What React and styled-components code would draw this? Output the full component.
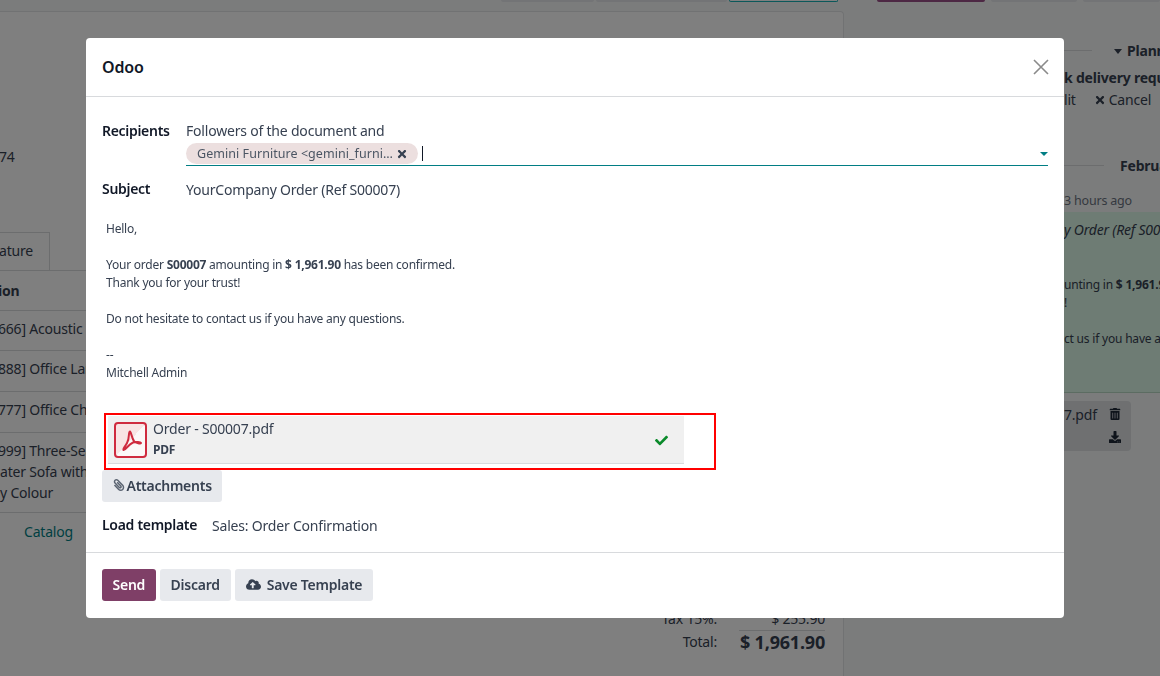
import React from "react";
import styled, { createGlobalStyle } from "styled-components";
import {
  FaCheck,
  FaCloudUploadAlt,
  FaDownload,
  FaPaperclip,
  FaTimes,
  FaTrashAlt,
} from "react-icons/fa";

const GlobalStyle = createGlobalStyle`
  html, body {
    margin: 0;
    padding: 0;
    height: 100%;
    overflow: hidden;
  }
  body {
    font-family: "Noto Sans", "Open Sans", sans-serif;
    font-size: 14px;
    letter-spacing: -0.2px;
    color: #374151;
    background: #f9fafb;
  }
`;

/* page behind the dialog */
const Page = styled.div`
  display: flex;
  width: 1160px;
  height: 676px;
  overflow: hidden;
  background: #f7f9f8;
`;

const Sheet = styled.div`
  width: 844px;
  flex: none;
  display: flex;
  flex-direction: column;
`;

const TopBar = styled.div`
  height: 2px;
  flex: none;
  display: flex;
  justify-content: ${(p) => (p.$start ? "flex-start" : "flex-end")};
  gap: ${(p) => p.$gap || 2}px;
  padding: 0 ${(p) => (p.$start ? 0 : 6)}px 0 ${(p) => (p.$start ? 33 : 0)}px;
`;

const TopButton = styled.div`
  width: ${(p) => p.$w}px;
  box-sizing: border-box;
  background: ${(p) => p.$bg};
  border: ${(p) => (p.$line ? `1px solid ${p.$line}` : "none")};
  border-top: none;
  border-radius: 0 0 3px 3px;
`;

const SheetCard = styled.div`
  margin-top: 9px;
  flex: 1;
  background: #fff;
  border: 1px solid #e2e4e6;
  border-left: none;
  border-bottom: none;
  border-top-right-radius: 4px;
  padding-top: 135px;
  overflow: hidden;
`;

const PartnerCode = styled.div`
  margin-left: -1px;
  height: 85px;
  line-height: 20px;
`;

const Tab = styled.div`
  width: 50px;
  height: 38px;
  box-sizing: border-box;
  border: 1px solid #d8dadd;
  border-left: none;
  border-bottom: none;
  text-align: right;
  padding: 8px 16px 0 0;
  overflow: hidden;
  white-space: nowrap;
  direction: rtl;
`;

const Row = styled.div`
  border-top: 1px solid #d8dadd;
  min-height: ${(p) => p.$h}px;
  box-sizing: border-box;
  padding-top: ${(p) => p.$pad}px;
  line-height: 21px;
  white-space: nowrap;
  text-indent: ${(p) => p.$indent || 0}px;
  font-weight: ${(p) => (p.$bold ? 700 : 400)};
  color: ${(p) => p.$color || "inherit"};
`;

const Totals = styled.div`
  margin: 56px 18px 0 0;
  display: grid;
  grid-template-columns: auto 86px;
  justify-content: end;
  column-gap: 22px;
  align-items: center;
`;

const TotalLabel = styled.div`
  text-align: right;
  line-height: 22px;
`;

const TotalValue = styled.div`
  text-align: right;
  border-top: ${(p) => (p.$big ? "1px solid #d8dadd" : "none")};
  font-size: ${(p) => (p.$big ? "18px" : "14px")};
  font-weight: ${(p) => (p.$big ? 700 : 400)};
  line-height: 22px;
  white-space: nowrap;
`;

const Chatter = styled.div`
  flex: 1;
  display: flex;
  flex-direction: column;
  overflow: hidden;
  white-space: nowrap;
`;

const DateLine = styled.div`
  display: flex;
  align-items: center;
  height: 24px;
  font-weight: 700;
  gap: ${(p) => p.$gap}px;
  margin-top: ${(p) => p.$top || 0}px;
  margin-left: 220px;
`;

const Rule = styled.div`
  width: ${(p) => p.$w}px;
  height: 1px;
  flex: none;
  background: #d8dadd;
`;

const Caret = styled.span`
  display: inline-block;
  border: 4px solid transparent;
  border-top: 5px solid #374151;
  border-bottom: none;
  margin-right: 5px;
  vertical-align: middle;
`;

const ChatterLine = styled.div`
  margin-left: 220px;
  line-height: 20px;
  margin-top: ${(p) => p.$top || 0}px;
  font-weight: ${(p) => (p.$bold ? 700 : 400)};
  font-size: ${(p) => p.$size || 14}px;
  color: ${(p) => p.$color || "inherit"};
`;

const ChatterActions = styled.div`
  margin-left: 220px;
  display: flex;
  gap: 18px;
  line-height: 20px;
  margin-top: 2px;
  align-items: center;
`;

const CancelAction = styled.span`
  display: inline-flex;
  align-items: center;
  gap: 3px;
`;

const Message = styled.div`
  margin-top: 1px;
  margin-left: 180px;
  height: 181px;
  box-sizing: border-box;
  background: #dcf8e8;
  border-bottom: 1px solid #b8d8c4;
  padding: 8px 0 0 40px;
  line-height: 18px;
  font-size: 12px;
`;

const MessageTitle = styled.div`
  font-style: italic;
  font-size: 14px;
  line-height: 20px;
  margin-bottom: 36px;
`;

const MessageGap = styled.div`
  height: 18px;
`;

const ChatterFile = styled.div`
  margin: 8px 0 0 180px;
  width: 107px;
  height: 50px;
  box-sizing: border-box;
  background: #dee0e3;
  border-radius: 0 4px 4px 0;
  padding: 4px 10px 0 40px;
  display: flex;
  justify-content: space-between;
`;

const FileTools = styled.div`
  display: flex;
  flex-direction: column;
  align-items: center;
  gap: 11px;
  padding-top: 3px;
  font-size: 12px;
  color: #1f2937;
`;

/* dialog */
const Backdrop = styled.div`
  position: fixed;
  inset: 0;
  background: rgba(0, 0, 0, 0.5);
  padding: 38px 0 0 86px;
`;

const Modal = styled.div`
  width: 978px;
  height: 580px;
  background: #fff;
  border-radius: 4px;
  display: flex;
  flex-direction: column;
  color: #374151;
`;

const ModalHeader = styled.div`
  height: 59px;
  flex: none;
  box-sizing: border-box;
  border-bottom: 1px solid #d8dadd;
  display: flex;
  align-items: center;
  justify-content: space-between;
  padding: 0 15px 0 16px;
`;

const ModalTitle = styled.div`
  font-size: 16px;
  font-weight: 600;
  color: #111827;
`;

const CloseIcon = styled.svg`
  width: 16px;
  height: 16px;
  stroke: #8a8a8a;
  stroke-width: 1.6;
  fill: none;
`;

const ModalBody = styled.div`
  flex: 1;
  padding: 24px 16px 0;
  display: flex;
  flex-direction: column;
`;

const FieldRow = styled.div`
  display: flex;
  align-items: ${(p) => p.$align || "flex-start"};
  margin-top: ${(p) => p.$top || 0}px;
`;

const FieldLabel = styled.div`
  width: ${(p) => p.$w}px;
  flex: none;
  font-weight: 600;
  letter-spacing: -0.3px;
  color: #111827;
  line-height: ${(p) => p.$lh || 20}px;
`;

const RecipientsBox = styled.div`
  flex: 1;
  line-height: 20px;
`;

const TagLine = styled.div`
  height: 24px;
  box-sizing: border-box;
  border-bottom: 1px solid #017e84;
  display: flex;
  align-items: center;
  margin-top: 1px;
  position: relative;
`;

const Tag = styled.span`
  height: 21px;
  width: 232px;
  box-sizing: border-box;
  border-radius: 11px;
  background: #ecdfdf;
  font-size: 12.5px;
  letter-spacing: 0.05px;
  display: flex;
  align-items: center;
  justify-content: space-between;
  padding: 0 10px 0 11px;
  white-space: nowrap;
  color: #4b5563;
`;

const TextCursor = styled.span`
  width: 1px;
  height: 15px;
  background: #111827;
  margin-left: 4px;
`;

const DropCaret = styled.span`
  position: absolute;
  right: 0;
  top: 10px;
  border: 4px solid transparent;
  border-top: 4px solid #017e84;
  border-bottom: none;
`;

const MailBody = styled.div`
  margin: 21px 0 0 4px;
  font-size: 12px;
  letter-spacing: -0.23px;
  line-height: 18px;
  color: #374151;
`;

const MailGap = styled.div`
  height: 18px;
`;

const Highlight = styled.div`
  margin: 31px 0 0 2px;
  width: 612px;
  height: 57px;
  box-sizing: border-box;
  border: 2px solid #f00;
  padding: 1px 30px 0 2px;
`;

const FileCard = styled.div`
  height: 48px;
  box-sizing: border-box;
  background: #f0f0f0;
  border-bottom: 1px solid #d8dadd;
  display: flex;
  align-items: center;
  padding: 0 16px 0 6px;
  gap: 6px;
`;

const FileInfo = styled.div`
  flex: 1;
  line-height: 20px;
`;

const FileKind = styled.div`
  font-size: 12px;
  font-weight: 700;
  line-height: 22px;
`;

const CheckMark = styled(FaCheck)`
  font-size: 13px;
  color: #0a8a2a;
  margin-top: 1px;
`;

const ClipIcon = styled(FaPaperclip)`
  font-size: 12px;
  transform: scaleX(-1);
  color: #5b6472;
`;

const Button = styled.button`
  height: 32px;
  border: none;
  border-radius: 3px;
  background: ${(p) => (p.$primary ? "#7f3f67" : "#e7e9ed")};
  color: ${(p) => (p.$primary ? "#fff" : "#374151")};
  font-family: inherit;
  font-size: 14px;
  font-weight: 600;
  letter-spacing: -0.25px;
  padding: 0 ${(p) => p.$pad || 11}px 2px;
  display: inline-flex;
  align-items: center;
  gap: ${(p) => p.$gap || 6}px;
`;

const AttachRow = styled.div`
  display: flex;
`;

const ModalFooter = styled.div`
  height: 66px;
  flex: none;
  box-sizing: border-box;
  border-top: 1px solid #d8dadd;
  padding: 16px 16px 0;
  display: flex;
  gap: 4px;
  align-items: flex-start;
`;

const PdfIcon = () => (
  <svg width="33" height="36" viewBox="0 0 33 36">
    <defs>
      <linearGradient id="pdfFill" x1="0" y1="0" x2="1" y2="1">
        <stop offset="0.5" stopColor="#f8e4e4" />
        <stop offset="0.5" stopColor="#fbf8f8" />
      </linearGradient>
    </defs>
    <rect x="1" y="1" width="31" height="34" rx="3" fill="url(#pdfFill)" stroke="#cf2b3f" strokeWidth="2" />
    <path
      d="M16 9.500C14 10 16 16 13 21C11 25 8.500 27 9.500 28C11.500 28.500 14 22.500 19 20.500C22 19.500 26.500 20 27 21C27 22 22 21.500 20 19C18 17 17.500 11 16 9.500Z"
      fill="none"
      stroke="#cf2b3f"
      strokeWidth="2"
      strokeLinejoin="round"
    />
  </svg>
);

function App() {
  return (
    <>
      <GlobalStyle />
      <Page>
        <Sheet>
          <TopBar>
            <TopButton $w={93} $bg="#e7e9ed" />
            <TopButton $w={131} $bg="#e7e9ed" />
            <TopButton $w={109} $bg="#fff" $line="#17b0b5" />
          </TopBar>
          <SheetCard>
            <PartnerCode>74</PartnerCode>
            <Tab>ature</Tab>
            <Row $h={40} $pad={9} $bold $indent={-2}>
              ion
            </Row>
            <Row $h={40} $pad={7} $indent={-2}>666] Acoustic Bloc Screens</Row>
            <Row $h={41} $pad={7} $indent={-2}>888] Office Lamp</Row>
            <Row $h={41} $pad={7} $indent={-2}>777] Office Chair</Row>
            <Row $h={80} $pad={7} $indent={-2}>
              999] Three-Seat
              <br />
              ater Sofa with
              <br />y Colour
            </Row>
            <Row $h={40} $pad={8} $indent={24} $color="#017e84">
              Catalog
            </Row>
            <Totals>
              <TotalLabel>Tax 15%:</TotalLabel>
              <TotalValue>$ 255.90</TotalValue>
              <TotalLabel>Total:</TotalLabel>
              <TotalValue $big>$ 1,961.90</TotalValue>
            </Totals>
          </SheetCard>
        </Sheet>
        <Chatter>
          <TopBar $start $gap={6}>
            <TopButton $w={112} $bg="#9a5088" />
            <TopButton $w={89} $bg="#e7e9ed" />
            <TopButton $w={80} $bg="#e7e9ed" />
          </TopBar>
          <DateLine $gap={22} $top={36}>
            <Rule $w={28} />
            <span>
              <Caret />
              Planned
            </span>
          </DateLine>
          <ChatterLine $bold $top={6}>k delivery request</ChatterLine>
          <ChatterActions>
            <span>lit</span>
            <CancelAction>
              <FaTimes size={12} />
              Cancel
            </CancelAction>
          </ChatterActions>
          <DateLine $gap={16} $top={43}>
            <Rule $w={40} />
            <span>February</span>
          </DateLine>
          <ChatterLine $top={14} $size={12.5} $color="#6b7280">3 hours ago</ChatterLine>
          <Message>
            <MessageTitle>y Order (Ref S00007)</MessageTitle>
            <div>
              unting in <b>$ 1,961.90</b>
            </div>
            <div>!</div>
            <MessageGap />
            <div>ct us if you have any</div>
          </Message>
          <ChatterFile>
            <span>7.pdf</span>
            <FileTools>
              <FaTrashAlt />
              <FaDownload />
            </FileTools>
          </ChatterFile>
        </Chatter>
      </Page>
      <Backdrop>
        <Modal>
          <ModalHeader>
            <ModalTitle>Odoo</ModalTitle>
            <CloseIcon viewBox="0 0 16 16">
              <path d="M1 1l14 14M15 1L1 15" />
            </CloseIcon>
          </ModalHeader>
          <ModalBody>
            <FieldRow>
              <FieldLabel $w={84}>Recipients</FieldLabel>
              <RecipientsBox>
                Followers of the document and
                <TagLine>
                  <Tag>
                    Gemini Furniture &lt;gemini_furni…
                    <FaTimes size={12} color="#374151" />
                  </Tag>
                  <TextCursor />
                  <DropCaret />
                </TagLine>
              </RecipientsBox>
            </FieldRow>
            <FieldRow $top={14}>
              <FieldLabel $w={84} $lh={18}>Subject</FieldLabel>
              <span>YourCompany Order (Ref S00007)</span>
            </FieldRow>
            <MailBody>
              Hello,
              <MailGap />
              Your order <b>S00007</b> amounting in <b>$ 1,961.90</b> has been confirmed.
              <br />
              Thank you for your trust!
              <MailGap />
              Do not hesitate to contact us if you have any questions.
              <MailGap />
              --
              <br />
              Mitchell Admin
            </MailBody>
            <Highlight>
              <FileCard>
                <PdfIcon />
                <FileInfo>
                  Order - S00007.pdf
                  <FileKind>PDF</FileKind>
                </FileInfo>
                <CheckMark />
              </FileCard>
            </Highlight>
            <AttachRow>
              <Button $gap={2} $pad={10.5}>
                <ClipIcon />
                Attachments
              </Button>
            </AttachRow>
            <FieldRow $top={13} $align="center">
              <FieldLabel $w={110}>Load template</FieldLabel>
              <span>Sales: Order Confirmation</span>
            </FieldRow>
          </ModalBody>
          <ModalFooter>
            <Button $primary $pad={10.5}>Send</Button>
            <Button>Discard</Button>
            <Button>
              <FaCloudUploadAlt size={15} />
              Save Template
            </Button>
          </ModalFooter>
        </Modal>
      </Backdrop>
    </>
  );
}

export default App;
